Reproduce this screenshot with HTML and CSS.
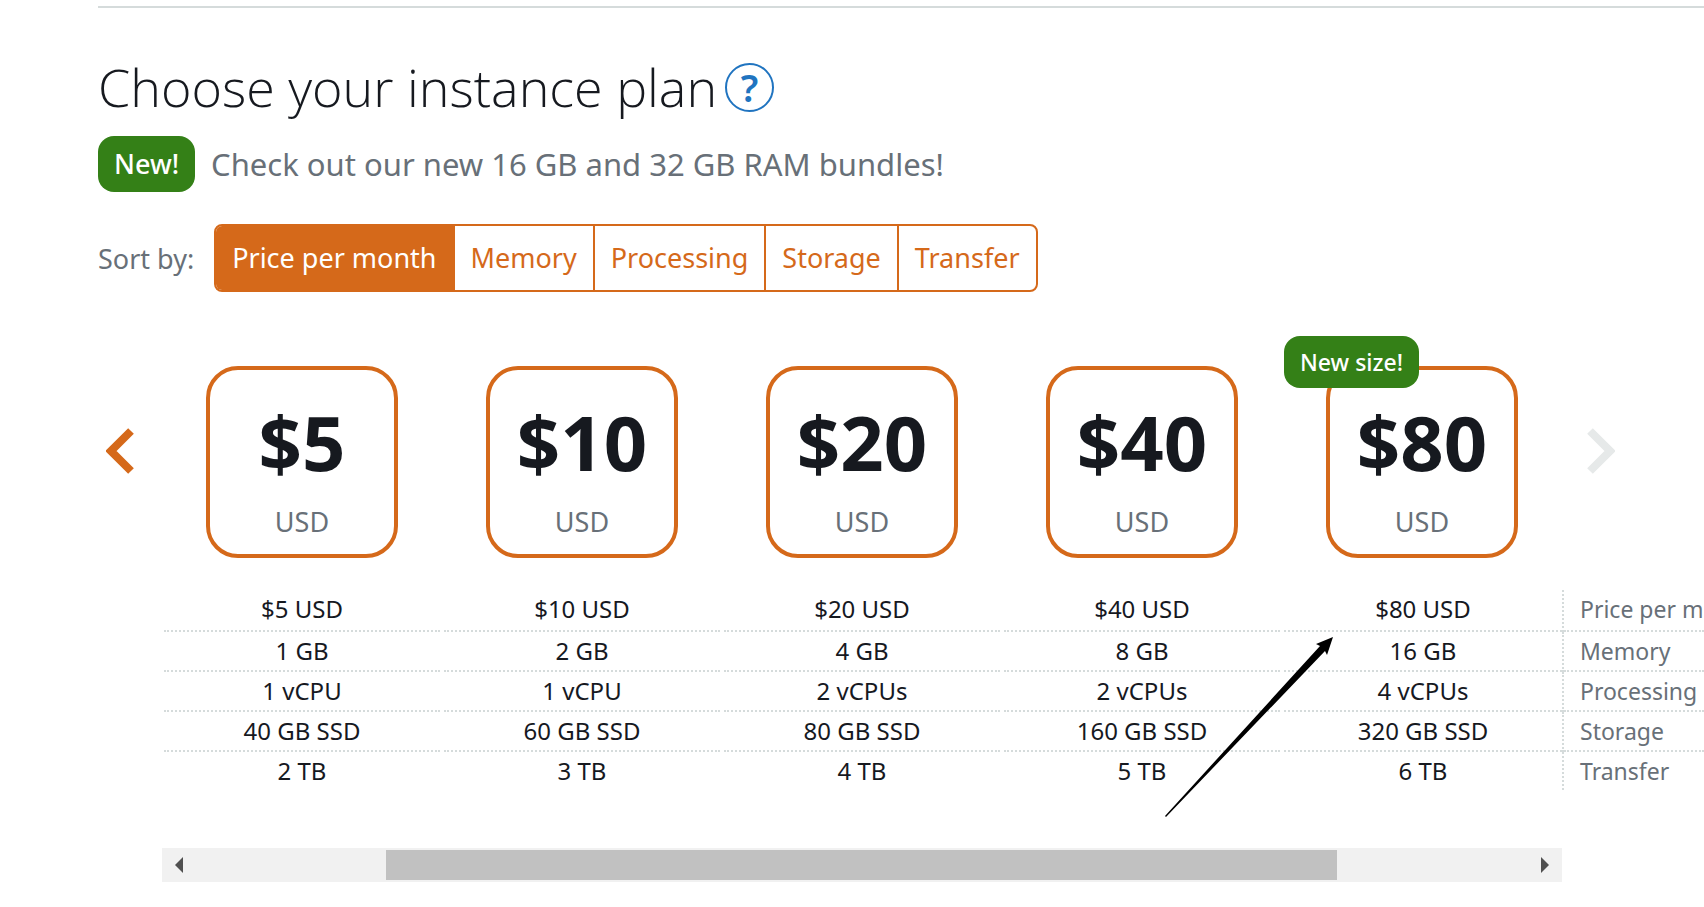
FILE: index.html
```
<!DOCTYPE html>
<html lang="en">
<head>
    <meta charset="UTF-8">
    <meta name="viewport" content="width=device-width, initial-scale=1.0">
    <title>Choose your instance plan</title>
    <link rel="stylesheet" href="styles.css">
</head>
<body>
    <main class="page">
        <header class="heading">
            <h1>Choose your instance plan</h1>
            <button class="help" type="button">?</button>
        </header>

        <p class="notice"><span class="badge">New!</span>Check out our new 16 GB and 32 GB RAM bundles!</p>

        <div class="sort">
            <span class="sort-label" id="sort-label">Sort by:</span>
            <div class="sort-group" role="group" aria-labelledby="sort-label">
                <button class="sort-btn active" type="button">Price per month</button>
                <button class="sort-btn" type="button">Memory</button>
                <button class="sort-btn" type="button">Processing</button>
                <button class="sort-btn" type="button">Storage</button>
                <button class="sort-btn" type="button">Transfer</button>
            </div>
        </div>

        <section class="carousel">
            <button class="nav" type="button" aria-label="Previous plans">
                <svg width="28" height="46" viewBox="0 0 28 46"><path d="M25 3 5 23l20 20" fill="none" stroke="currentColor" stroke-width="8"/></svg>
            </button>
            <div class="plans">
                <div class="plan"><button class="card" type="button"><span class="price">$5</span><span class="currency">USD</span></button></div>
                <div class="plan"><button class="card" type="button"><span class="price">$10</span><span class="currency">USD</span></button></div>
                <div class="plan"><button class="card" type="button"><span class="price">$20</span><span class="currency">USD</span></button></div>
                <div class="plan"><button class="card" type="button"><span class="price">$40</span><span class="currency">USD</span></button></div>
                <div class="plan"><span class="badge badge-size">New size!</span><button class="card" type="button"><span class="price">$80</span><span class="currency">USD</span></button></div>
            </div>
            <button class="nav nav-next" type="button" aria-label="Next plans" disabled>
                <svg width="28" height="46" viewBox="0 0 28 46"><path d="M3 3l20 20L3 43" fill="none" stroke="currentColor" stroke-width="8"/></svg>
            </button>
        </section>

        <div class="specs-wrap">
            <table class="specs">
                <tr><td><span>$5 USD</span></td><td><span>$10 USD</span></td><td><span>$20 USD</span></td><td><span>$40 USD</span></td><td><span>$80 USD</span></td><th scope="row"><span>Price per month</span></th></tr>
                <tr><td><span>1 GB</span></td><td><span>2 GB</span></td><td><span>4 GB</span></td><td><span>8 GB</span></td><td><span>16 GB</span></td><th scope="row"><span>Memory</span></th></tr>
                <tr><td><span>1 vCPU</span></td><td><span>1 vCPU</span></td><td><span>2 vCPUs</span></td><td><span>2 vCPUs</span></td><td><span>4 vCPUs</span></td><th scope="row"><span>Processing</span></th></tr>
                <tr><td><span>40 GB SSD</span></td><td><span>60 GB SSD</span></td><td><span>80 GB SSD</span></td><td><span>160 GB SSD</span></td><td><span>320 GB SSD</span></td><th scope="row"><span>Storage</span></th></tr>
                <tr><td><span>2 TB</span></td><td><span>3 TB</span></td><td><span>4 TB</span></td><td><span>5 TB</span></td><td><span>6 TB</span></td><th scope="row"><span>Transfer</span></th></tr>
            </table>
            <!-- pointer to the new plan -->
            <svg class="pointer" width="168" height="180" viewBox="0 0 168 180"><path d="M168 0 162 18 160 14 1 180 0 179 155 9 151 7Z"/></svg>
        </div>

        <div class="scrollbar">
            <button class="scroll-btn" type="button" aria-label="Scroll left">
                <svg width="8" height="16" viewBox="0 0 8 16"><path d="M8 0v16L0 8z"/></svg>
            </button>
            <div class="track"><div class="thumb"></div></div>
            <button class="scroll-btn" type="button" aria-label="Scroll right">
                <svg width="8" height="16" viewBox="0 0 8 16"><path d="M0 0v16l8-8z"/></svg>
            </button>
        </div>
    </main>
</body>
</html>
```
FILE: styles.css
```
* {
    margin: 0;
    padding: 0;
    box-sizing: border-box;
}

body {
    background: #fff;
    color: #16191f;
    font-family: 'Amazon Ember', 'Noto Sans', sans-serif;
    overflow-x: hidden;
}

button {
    font: inherit;
    color: inherit;
    background: none;
    border: none;
    cursor: pointer;
}

svg {
    display: block;
}

.page {
    margin: 6px 0 0 98px;
    border-top: 2px solid #d5dbdb;
}

/* Heading */
.heading {
    display: flex;
    align-items: center;
    gap: 8px;
    padding-top: 39px;
}

h1 {
    font-family: 'Open Sans', sans-serif;
    font-size: 52px;
    font-weight: 300;
    line-height: 80px;
}

.help {
    width: 49px;
    height: 49px;
    border: 2px solid #2074c0;
    border-radius: 50%;
    color: #2074c0;
    font-size: 38px;
    font-weight: 600;
    line-height: 44px;
}

.notice {
    display: flex;
    align-items: center;
    gap: 16px;
    margin-top: 9px;
    color: #687078;
    font-size: 31px;
}

.badge {
    padding: 0 16px;
    border-radius: 16px;
    background: #348017;
    color: #fff;
    font-size: 27px;
    font-weight: 500;
    line-height: 56px;
}

/* Sort buttons */
.sort {
    display: flex;
    align-items: center;
    gap: 20px;
    margin-top: 32px;
    color: #687078;
    font-size: 27px;
}

.sort-group {
    display: flex;
    border: 2px solid #d5691a;
    border-radius: 8px;
    overflow: hidden;
}

.sort-btn {
    padding: 0 16px;
    color: #d5691a;
    line-height: 64px;
}

.sort-btn + .sort-btn {
    border-left: 2px solid #d5691a;
}

.sort-btn.active {
    background: #d5691a;
    color: #fff;
}

/* Plans */
.carousel {
    display: grid;
    grid-template-columns: 64px 1fr 142px;
    align-items: center;
    margin-top: 74px;
}

.nav {
    padding: 8px 8px 30px;
    color: #d5691a;
}

.nav-next {
    padding-left: 25px;
    color: #e6e9e9;
}

.plans {
    display: flex;
}

.plan {
    position: relative;
    flex: 1;
    display: flex;
    justify-content: center;
}

.card {
    display: flex;
    flex-direction: column;
    align-items: center;
    width: 192px;
    height: 192px;
    padding-top: 22px;
    border: 4px solid #d5691a;
    border-radius: 32px;
}

.price {
    font-size: 76px;
    font-weight: 700;
    line-height: 100px;
}

.currency {
    margin-top: 12px;
    color: #687078;
    font-size: 27px;
    line-height: 36px;
}

.badge-size {
    position: absolute;
    top: -30px;
    left: 2px;
    font-size: 23px;
    line-height: 52px;
}

/* Specs table */
.specs-wrap {
    position: relative;
    margin: 32px 0 0 64px;
    overflow-x: clip;
}

.specs {
    width: 100%;
    border-collapse: separate;
    border-spacing: 0;
    table-layout: fixed;
    font-size: 24px;
    line-height: 38px;
    text-align: center;
}

.specs th {
    width: 142px;
    border-left: 2px dotted #d5dbdb;
    color: #687078;
    font-size: 23px;
    font-weight: 400;
    text-align: left;
    white-space: nowrap;
}

.specs td span,
.specs th span {
    display: block;
    border-bottom: 2px dotted #d5dbdb;
}

.specs td span {
    margin: 0 2px;
}

.specs td:nth-child(5) span {
    margin-right: 0;
}

.specs th span {
    padding-left: 16px;
}

.specs tr:first-child span {
    padding-bottom: 2px;
}

.specs tr:last-child span {
    border-bottom: none;
}

.pointer {
    position: absolute;
    right: 371px;
    top: 47px;
}

/* Scrollbar */
.scrollbar {
    display: flex;
    margin: 58px 142px 25px 64px;
    background: #f1f1f1;
}

.scroll-btn {
    padding: 9px 13px;
    color: #505050;
    fill: currentColor;
}

.track {
    flex: 1;
    padding: 2px 191px 2px 190px;
}

.thumb {
    height: 30px;
    background: #c1c1c1;
}
```
